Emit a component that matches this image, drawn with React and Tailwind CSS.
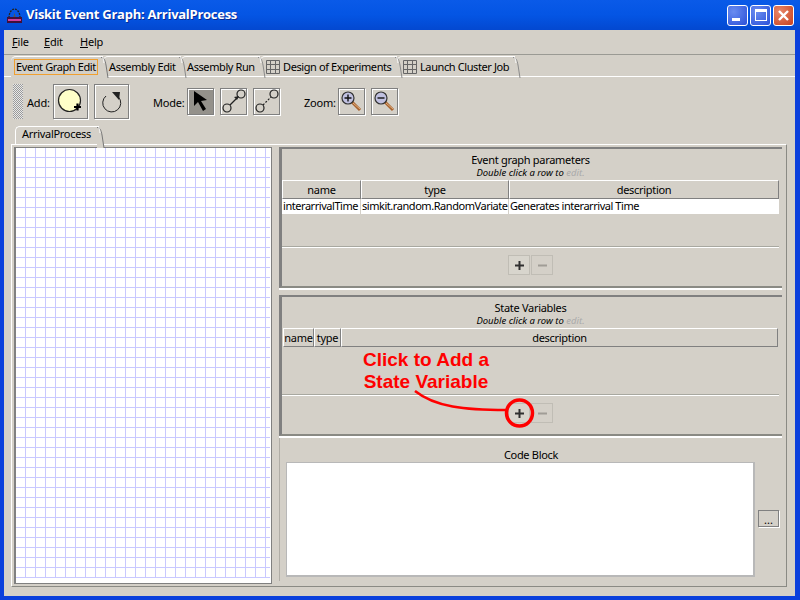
const ui = { fontFamily: '"Noto Sans", sans-serif' };

function TabEdge({ active }) {
  return (
    <svg width="9" height="21" viewBox="0 0 9 21" className="absolute right-[-7px] top-0">
      {active && <path d="M0 1 C3 1 4 3 5 8 L7 21 L0 21 Z" fill="#d4d0c8" />}
      <path d="M0 .5 C3 .5 4 3 5 8 L7 21" fill="none" stroke={active ? "#777" : "#8a8a8a"} />
      <path d="M1 .5 C2 .5 2.5 2 3 6" fill="none" stroke="#fff" />
    </svg>
  );
}

function GridIcon() {
  return (
    <svg width="15" height="15" viewBox="0 0 15 15" className="mr-[2px] shrink-0">
      <path d="M.5.5h13v13H.5zM4.5.5v13M9.5.5v13M.5 4.5h13M.5 9.5h13" fill="none" stroke="#666" />
    </svg>
  );
}

function Tab({ label, width, grid, active }) {
  return (
    <div
      className={`relative h-[21px] flex items-center shrink-0 border-t border-white rounded-tl-[5px] text-[11px] tracking-[-0.4px] text-black ${active ? "z-10 h-[22px] pl-[3px] bg-[#d4d0c8]" : "pl-[6px] pt-[1px]"}`}
      style={{ width }}
    >
      {grid && <GridIcon />}
      {active ? (
        <span className="border border-[#f0a030] h-[16px] leading-[14px] px-[1px] mt-[-1px] whitespace-nowrap">{label}</span>
      ) : (
        <span className="whitespace-nowrap">{label}</span>
      )}
      <TabEdge active={active} />
    </div>
  );
}

function ToolButton({ size, selected, children, className = "" }) {
  return (
    <div
      className={`flex items-center justify-center shrink-0 border border-[#808080] shadow-[1px_1px_0_#fff,inset_1px_1px_0_#fff] ${selected ? "bg-[#94918b]" : ""} ${size === "lg" ? "w-[35px] h-[35px]" : "w-[27px] h-[27px]"} ${className}`}
    >
      {children}
    </div>
  );
}

function HeaderCell({ width, children, grow }) {
  return (
    <div
      className={`h-[19px] pt-[1px] flex items-center justify-center border-t border-l border-white border-r border-b border-r-[#808080] border-b-[#808080] text-[11px] tracking-[-0.3px] ${grow ? "flex-1" : "shrink-0"}`}
      style={grow ? undefined : { width }}
    >
      {children}
    </div>
  );
}

function PlusMinus() {
  return (
    <div className="flex justify-center gap-[1px]">
      <div className="w-[22px] h-[20px] flex items-center justify-center border border-[#c0bdb5] bg-[#d8d5cd]">
        <svg width="9" height="9" viewBox="0 0 9 9"><path d="M3.5 0h2v3.5H9v2H5.5V9h-2V5.5H0v-2h3.5z" fill="#303030" /></svg>
      </div>
      <div className="w-[22px] h-[20px] flex items-center justify-center border border-[#c0bdb5]">
        <svg width="9" height="9" viewBox="0 0 9 9"><path d="M0 3.5h9v2H0z" fill="#a09d96" /></svg>
      </div>
    </div>
  );
}

function Heading({ title }) {
  return (
    <div className="flex flex-col items-center text-black">
      <div className="text-[11px] leading-[12px] tracking-[-0.3px]">{title}</div>
      <div className="text-[9.5px] leading-[11px] mt-[1px] italic">
        Double click a row to <span className="text-[#aaa]">edit.</span>
      </div>
    </div>
  );
}

function Magnifier({ minus }) {
  return (
    <svg width="25" height="25" viewBox="0 0 25 25">
      <path d="M13 13 L21 21" stroke="#a8622e" strokeWidth="3" />
      <path d="M14 14 L21 20" stroke="#e0b080" strokeWidth="1" />
      <circle cx="9" cy="9" r="6" fill="#c0c0e0" stroke="#333" strokeWidth="1.2" />
      <path d={minus ? "M5.5 9h7" : "M5.5 9h7M9 5.5v7"} stroke="#111" strokeWidth="1.4" />
    </svg>
  );
}

function EdgeIcon({ dashed }) {
  return (
    <svg width="25" height="25" viewBox="0 0 25 25">
      <circle cx="6" cy="19" r="4" fill="none" stroke="#222" strokeWidth="1.2" />
      <circle cx="20" cy="5" r="4" fill="none" stroke="#222" strokeWidth="1.2" />
      <path d="M9 16 L17 8" stroke="#222" strokeWidth="1.2" strokeDasharray={dashed ? "2 1.5" : undefined} />
      {!dashed && <path d="M18 7 l-5 1 3 3z" fill="#222" />}
    </svg>
  );
}

function WinButton({ close, children }) {
  return (
    <div className={`w-[21px] h-[21px] rounded-[3px] border border-white flex items-center justify-center ${close ? "bg-[radial-gradient(circle_at_30%_30%,#e8886a,#c8401c)]" : "bg-[radial-gradient(circle_at_30%_30%,#6a8cf0,#2a50d8)]"}`}>
      {children}
    </div>
  );
}

export default function App() {
  return (
    <div className="relative w-[800px] h-[600px] overflow-hidden flex flex-col bg-[#0a3fdc] text-black" style={ui}>
      {/* Title bar */}
      <div className="h-[30px] shrink-0 flex items-center pl-[6px] pr-[6px] bg-gradient-to-b from-[#0a5ae8] via-[#0455e4] to-[#0348d0]">
        <svg width="17" height="17" viewBox="0 0 17 17" className="mr-[3px]">
          <path d="M3 11 C3 5 6 2 8.5 2 C11 2 14 5 14 11" fill="none" stroke="#222" strokeWidth="1.3" strokeDasharray="2 1" />
          <path d="M7 11 L8.5 6 L10 11" fill="#555" />
          <rect x="1" y="10" width="15" height="6" fill="#40103a" />
          <rect x="2" y="12" width="13" height="2" fill="#d040a0" />
        </svg>
        <span className="text-white font-bold text-[13px] tracking-[-0.27px] [text-shadow:1px_1px_0_#0a2a90] whitespace-nowrap" style={{ fontFamily: '"Open Sans", sans-serif' }}>
          Viskit Event Graph: ArrivalProcess
        </span>
        <div className="ml-auto flex gap-[2px]">
          <WinButton><div className="w-[8px] h-[3px] bg-white mt-[8px] mr-[4px]" /></WinButton>
          <WinButton><div className="w-[12px] h-[12px] border border-white border-t-[3px]" /></WinButton>
          <WinButton close>
            <svg width="13" height="13" viewBox="0 0 13 13"><path d="M2 2 L11 11 M11 2 L2 11" stroke="#fff" strokeWidth="2.4" /></svg>
          </WinButton>
        </div>
      </div>

      {/* Window body */}
      <div className="ml-[4px] mr-[5px] h-[566px] shrink-0 bg-[#d4d0c8] flex flex-col">
        {/* Menu */}
        <div className="h-[25px] shrink-0 flex items-center pl-[8px] pt-[1px] border-b border-[#9a9a94] text-[11px] tracking-[-0.2px]">
          <span className="w-[32px]"><u>F</u>ile</span>
          <span className="w-[36px]"><u>E</u>dit</span>
          <span><u>H</u>elp</span>
        </div>

        {/* Tabs */}
        <div className="h-[22px] shrink-0 flex items-start pl-[7px] pt-[1px] border-b border-white">
          <Tab label="Event Graph Edit" width={92} active />
          <Tab label="Assembly Edit" width={78} />
          <Tab label="Assembly Run" width={79} />
          <Tab label="Design of Experiments" width={137} grid />
          <Tab label="Launch Cluster Job" width={118} grid />
        </div>

        {/* Toolbar */}
        <div className="h-[48px] shrink-0 flex items-center text-[11px] tracking-[-0.2px] pl-[9px]">
          <div className="w-[10px] h-[35px] bg-[repeating-conic-gradient(#9a9a9a_0_25%,#e8e8e8_0_50%)] bg-[size:2px_2px]" />
          <span className="ml-[4px] w-[26px] mt-[4px]">Add:</span>
          <ToolButton size="lg">
            <svg width="27" height="27" viewBox="0 0 27 27">
              <circle cx="12.5" cy="12.5" r="11" fill="#ffffc8" stroke="#222" strokeWidth="1.2" />
              <path d="M17 19h7M20.5 15.5v7" stroke="#000" strokeWidth="2.2" />
            </svg>
          </ToolButton>
          <ToolButton size="lg" className="ml-[6px]">
            <svg width="25" height="25" viewBox="0 0 25 25">
              <path d="M7 7 A9 9 0 1 0 19.5 8" fill="none" stroke="#222" strokeWidth="1" />
              <path d="M13 3 L21 3 L20 11 Z" fill="#222" />
            </svg>
          </ToolButton>
          <span className="ml-[24px] w-[34px] mt-[4px]">Mode:</span>
          <ToolButton selected>
            <svg width="22" height="24" viewBox="0 0 22 24"><path d="M4 2 L4 17 L8 13 L13 22 L16 20 L11 12 L17 11 Z" fill="#000" /></svg>
          </ToolButton>
          <ToolButton className="ml-[6px]"><EdgeIcon /></ToolButton>
          <ToolButton className="ml-[6px]"><EdgeIcon dashed /></ToolButton>
          <span className="ml-[24px] w-[34px] mt-[4px]">Zoom:</span>
          <ToolButton><Magnifier /></ToolButton>
          <ToolButton className="ml-[6px]"><Magnifier minus /></ToolButton>
        </div>

        {/* Inner tab */}
        <div className="h-[19px] shrink-0 pl-[11px] flex items-end">
          <div className="relative w-[84px] h-[18px] border-t border-l border-white rounded-tl-[5px] pl-[6px] text-[11px] leading-[14px] tracking-[-0.3px] bg-[#d4d0c8]">
            ArrivalProcess
            <TabEdge active />
          </div>
        </div>

        {/* Main pane */}
        <div className="ml-[7px] w-[776px] h-[443px] shrink-0 border border-t-white border-l-white border-r-[#8a8a84] border-b-[#8a8a84] flex items-start pt-[2px] pl-[2px]">
          {/* Canvas */}
          <div className="w-[258px] h-[437px] shrink-0 border-t border-l-2 border-b border-r border-[#808080] bg-white overflow-hidden">
            <svg width="254" height="430" className="block" shapeRendering="crispEdges">
              <defs>
                <pattern id="canvas-grid" width="10" height="10" patternUnits="userSpaceOnUse">
                  <rect x="9" width="1" height="10" fill="#c8c8ff" />
                  <rect y="9" width="10" height="1" fill="#c8c8ff" />
                </pattern>
              </defs>
              <rect width="254" height="430" fill="url(#canvas-grid)" />
            </svg>
          </div>

          {/* Right column */}
          <div className="ml-[7px] w-[503px] shrink-0 flex flex-col">
            {/* Parameters */}
            <div className="h-[141px] flex flex-col border-t-2 border-l-[3px] border-b-2 border-[#808080] border-b-[#8a8a84] relative">
              <div className="h-[31px] pt-[5px] pr-[3px] shrink-0"><Heading title="Event graph parameters" /></div>
              <div className="h-[67px] shrink-0 mr-[3px] border-b border-[#a8a8a0] shadow-[0_1px_0_#fff] flex flex-col">
                <div className="flex">
                  <HeaderCell width={79}>name</HeaderCell>
                  <HeaderCell width={148}>type</HeaderCell>
                  <HeaderCell grow>description</HeaderCell>
                </div>
                <div className="flex h-[15px] bg-white text-[11px] leading-[14px] tracking-[-0.45px] whitespace-nowrap">
                  <div className="w-[79px] pl-[1px] border-r border-[#d4d0c8]">interarrivalTime</div>
                  <div className="w-[148px] pl-[1px] border-r border-[#d4d0c8]">simkit.random.RandomVariate</div>
                  <div className="flex-1 pl-[1px]">Generates interarrival Time</div>
                </div>
              </div>
              <div className="pt-[8px] pr-[3px]"><PlusMinus /></div>
            </div>

            <div className="h-[7px] shrink-0 border-t-[2px] border-white" />

            {/* State variables */}
            <div className="h-[141px] flex flex-col border-t-2 border-l-[3px] border-b-2 border-[#808080] border-b-[#8a8a84]">
              <div className="h-[31px] pt-[5px] pr-[3px] shrink-0"><Heading title="State Variables" /></div>
              <div className="h-[67px] shrink-0 mr-[3px] border-b border-[#a8a8a0] shadow-[0_1px_0_#fff] pl-[1px] pr-[1px]">
                <div className="flex">
                  <HeaderCell width={31}>name</HeaderCell>
                  <HeaderCell width={27}>type</HeaderCell>
                  <HeaderCell grow>description</HeaderCell>
                </div>
              </div>
              <div className="pt-[8px] pr-[3px]"><PlusMinus /></div>
            </div>

            <div className="h-[2px] shrink-0 bg-white" />

            {/* Code block */}
            <div className="h-[143px] flex flex-col border-l border-[#b0ada6] pl-[6px]">
              <div className="h-[24px] shrink-0 pt-[10px] pr-[6px] text-center text-[11px] leading-[13px] tracking-[-0.3px]">Code Block</div>
              <div className="flex items-center">
                <div className="w-[469px] h-[115px] bg-white border border-[#b8b8b8] border-r-2 border-b-2 shrink-0" />
                <div className="ml-[3px] mt-[-2px] w-[21px] h-[17px] border border-[#808080] shadow-[1px_1px_0_#fff] flex items-center justify-center text-[11px] leading-[13px] pt-[2px]">...</div>
              </div>
            </div>
          </div>
        </div>
      </div>

      {/* Annotation over the state variables table */}
      <div className="absolute left-[361px] top-[349px] w-[130px] text-[#ff0000] font-bold text-[19px] leading-[22px] text-center whitespace-nowrap" style={{ fontFamily: '"Liberation Sans", sans-serif' }}>
        Click to Add a<br />State Variable
      </div>
      <svg width="140" height="50" viewBox="0 0 140 50" className="absolute left-[400px] top-[385px]">
        <path d="M15 6 C35 22 65 25 106 25" fill="none" stroke="#f00" strokeWidth="2.5" />
        <circle cx="119.5" cy="28" r="13" fill="none" stroke="#f00" strokeWidth="3.5" />
      </svg>
    </div>
  );
}
